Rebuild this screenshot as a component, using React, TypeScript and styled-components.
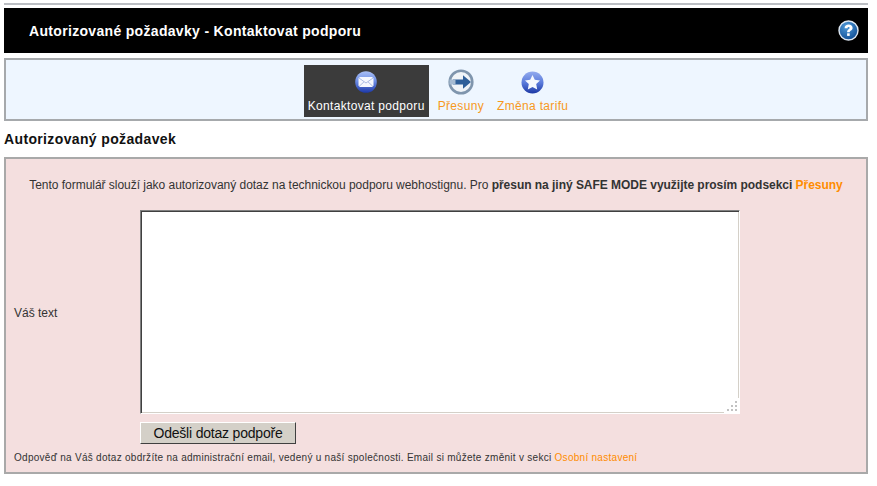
import React from "react";
import styled, { createGlobalStyle } from "styled-components";

const Global = createGlobalStyle`
  html, body { margin: 0; padding: 0; background: #fff; }
  body { font-family: "Liberation Sans", Arial, sans-serif; color: #333; }
`;

const Page = styled.div`
  width: 864px;
  margin-left: 4px;
  padding-top: 3px;
`;

const TopRule = styled.div`
  height: 2px;
  background: #bbbec3;
  margin-bottom: 3px;
`;

const TitleBar = styled.header`
  height: 45px;
  background: #000;
  display: flex;
  align-items: center;
  justify-content: space-between;
  padding: 0 9px 0 25px;
  margin-bottom: 5px;
`;

const Title = styled.h1`
  margin: 0;
  font-size: 14px;
  font-weight: bold;
  color: #fff;
  letter-spacing: 0.32px;
`;

const Nav = styled.nav`
  height: 63px;
  box-sizing: border-box;
  border: 2px solid #a6a9ac;
  background: #eef6ff;
  display: flex;
  justify-content: center;
  align-items: flex-start;
  padding: 5px 0 0 4px;
  gap: 5px;
  margin-bottom: 9px;
`;

const Tab = styled.a<{ $active?: boolean }>`
  height: 52px;
  box-sizing: border-box;
  display: flex;
  flex-direction: column;
  align-items: center;
  padding: 4px 4px 0;
  background: ${(p) => (p.$active ? "#3b3b3b" : "transparent")};
  color: ${(p) => (p.$active ? "#fff" : "#f7991d")};
  font-size: 12px;
  line-height: 14px;
  letter-spacing: 0.33px;
  white-space: nowrap;
`;

const TabIcon = styled.span`
  width: 26px;
  height: 26px;
  display: flex;
  align-items: center;
  justify-content: center;
  margin-bottom: 4px;
`;

const Heading = styled.h2`
  margin: 0 0 9px;
  font-size: 14px;
  line-height: 18px;
  font-weight: bold;
  color: #111;
  letter-spacing: 0.36px;
`;

const Panel = styled.section`
  height: 317px;
  box-sizing: border-box;
  border: 2px solid #a9a9a9;
  background: #f4dfdf;
  font-size: 12px;
  color: #333;
`;

const Intro = styled.p`
  margin: 0;
  padding-top: 19px;
  height: 51px;
  box-sizing: border-box;
  text-align: center;
  line-height: 14px;
  letter-spacing: -0.03px;
`;

const Link = styled.a`
  color: #ff8c00;
`;

const BoldLink = styled(Link)`
  font-weight: bold;
`;

const Row = styled.div`
  display: grid;
  grid-template-columns: 126px 600px;
  padding-left: 8px;
  align-items: center;
`;

const Label = styled.label`
  line-height: 14px;
  padding-top: 2px;
`;

const Area = styled.textarea`
  display: block;
  width: 600px;
  height: 204px;
  box-sizing: border-box;
  border: 1px solid;
  border-color: #808080 #fff #fff #808080;
  box-shadow: inset 1px 1px 0 #404040, inset -1px -1px 0 #d4d0c8;
  background: #fff;
  margin: 0;
  padding: 3px;
  &::-webkit-resizer {
    background-color: #fff;
    background-repeat: no-repeat;
    background-size: 2px 2px;
    background-image:
      linear-gradient(#c2c2c2, #c2c2c2), linear-gradient(#c2c2c2, #c2c2c2),
      linear-gradient(#c2c2c2, #c2c2c2), linear-gradient(#c2c2c2, #c2c2c2),
      linear-gradient(#c2c2c2, #c2c2c2), linear-gradient(#c2c2c2, #c2c2c2);
    background-position:
      right 2px bottom 2px, right 6px bottom 2px, right 10px bottom 2px,
      right 2px bottom 6px, right 6px bottom 6px, right 2px bottom 10px;
  }
`;

const Actions = styled.div`
  padding: 8px 0 0 134px;
`;

const Submit = styled.button`
  display: block;
  width: 156px;
  height: 22px;
  box-sizing: border-box;
  padding: 0;
  background: #d4d0c8;
  border: 1px solid;
  border-color: #fff #404040 #404040 #fff;
  font-family: "Liberation Sans", Arial, sans-serif;
  font-size: 14px;
  letter-spacing: -0.2px;
  color: #111;
`;

const Note = styled.p`
  margin: 7px 0 0 8px;
  font-size: 10px;
  line-height: 14px;
  color: #333;
  letter-spacing: 0.28px;
  white-space: nowrap;
`;

const HelpIcon = () => (
  <svg width="21" height="21" viewBox="0 0 21 21">
    <defs>
      <radialGradient id="h" cx="40%" cy="30%" r="75%">
        <stop offset="0" stopColor="#4f9ad8" />
        <stop offset="1" stopColor="#0e4c94" />
      </radialGradient>
    </defs>
    <circle cx="10.5" cy="10.5" r="9.5" fill="url(#h)" stroke="#dfe8f2" strokeWidth="1.4" />
    <path d="M6.6 8.2C6.6 6 8.4 4.6 10.7 4.6 13 4.6 14.6 6 14.6 7.9c0 2.5-2.9 2.5-2.9 4.4H9.1c0-3.1 2.5-3 2.5-4.3 0-.7-.4-1-1-1-.7 0-1.1.5-1.1 1.2Z" fill="#fff" />
    <rect x="9.1" y="13.3" width="2.6" height="2.6" fill="#fff" />
  </svg>
);

const MailIcon = () => (
  <svg width="22" height="22" viewBox="0 0 22 22">
    <defs>
      <linearGradient id="m" x1="0" y1="0" x2="0" y2="1">
        <stop offset="0" stopColor="#aac0f5" />
        <stop offset="0.45" stopColor="#6f8fe6" />
        <stop offset="1" stopColor="#1c38a8" />
      </linearGradient>
    </defs>
    <circle cx="11" cy="11" r="10.8" fill="url(#m)" />
    <path d="M3.5 7.2 5 6h12l1.500 1.200v7.600L17 16H5l-1.500-1.200Z" fill="#f6f8fe" />
    <path d="M4 7 11 12l7-5M4 15.500 9 10.800M18 15.500 13 10.800" fill="none" stroke="#a6b6e0" strokeWidth="0.9" />
  </svg>
);

const ArrowIcon = () => (
  <svg width="26" height="26" viewBox="0 0 26 26">
    <circle cx="13" cy="13" r="11.3" fill="#f0f4f8" stroke="#7f95ad" strokeWidth="2.6" />
    <path d="M5 10.500h10V6.200L23 13l-8 6.800v-4.300H5Z" fill="#2f5f99" />
    <rect x="1.500" y="10.500" width="6" height="5" fill="#a6bbd2" />
  </svg>
);

const StarIcon = () => (
  <svg width="23" height="23" viewBox="0 0 23 23">
    <defs>
      <linearGradient id="s" x1="0" y1="0" x2="0" y2="1">
        <stop offset="0" stopColor="#93abee" />
        <stop offset="0.5" stopColor="#5c7cdc" />
        <stop offset="1" stopColor="#1c38a4" />
      </linearGradient>
    </defs>
    <circle cx="11.5" cy="11.500" r="11" fill="url(#s)" />
    <path d="m11.500 4 2.300 4.800 5.200.7-3.800 3.600 1 5.300-4.700-2.500-4.700 2.500 1-5.300-3.800-3.600 5.200-.7Z" fill="#f6f8fe" />
  </svg>
);

export default function App() {
  return (
    <Page>
      <Global />
      <TopRule />
      <TitleBar>
        <Title>Autorizované požadavky - Kontaktovat podporu</Title>
        <HelpIcon />
      </TitleBar>
      <Nav>
        <Tab $active>
          <TabIcon><MailIcon /></TabIcon>
          Kontaktovat podporu
        </Tab>
        <Tab>
          <TabIcon><ArrowIcon /></TabIcon>
          Přesuny
        </Tab>
        <Tab>
          <TabIcon><StarIcon /></TabIcon>
          Změna tarifu
        </Tab>
      </Nav>
      <Heading>Autorizovaný požadavek</Heading>
      <Panel>
        <Intro>
          Tento formulář slouží jako autorizovaný dotaz na technickou podporu webhostignu. Pro{" "}
          <b>přesun na jiný SAFE MODE využijte prosím podsekci</b> <BoldLink>Přesuny</BoldLink>
        </Intro>
        <Row>
          <Label>Váš text</Label>
          <Area />
        </Row>
        <Actions>
          <Submit>Odešli dotaz podpoře</Submit>
        </Actions>
        <Note>
          Odpověď na Váš dotaz obdržíte na administrační email, vedený u naší společnosti. Email si můžete změnit v sekci{" "}
          <Link>Osobní nastavení</Link>
        </Note>
      </Panel>
    </Page>
  );
}
